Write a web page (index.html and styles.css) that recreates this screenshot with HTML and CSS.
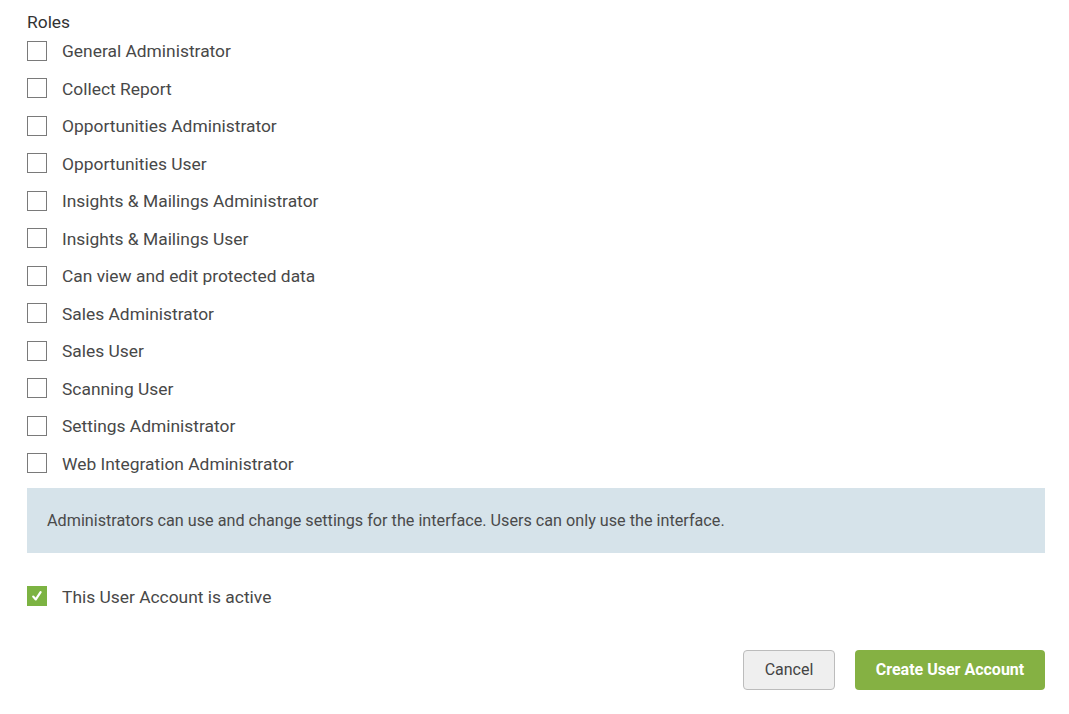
FILE: index.html
```html
<!DOCTYPE html>
<html>
<head>
<meta charset="utf-8">
<link rel="stylesheet" href="styles.css">
</head>
<body>
<div class="form">
  <div class="heading">Roles</div>
  <div class="roles">
    <label class="row"><span class="box"></span><span class="text">General Administrator</span></label>
    <label class="row"><span class="box"></span><span class="text">Collect Report</span></label>
    <label class="row"><span class="box"></span><span class="text">Opportunities Administrator</span></label>
    <label class="row"><span class="box"></span><span class="text">Opportunities User</span></label>
    <label class="row"><span class="box"></span><span class="text">Insights &amp; Mailings Administrator</span></label>
    <label class="row"><span class="box"></span><span class="text">Insights &amp; Mailings User</span></label>
    <label class="row"><span class="box"></span><span class="text">Can view and edit protected data</span></label>
    <label class="row"><span class="box"></span><span class="text">Sales Administrator</span></label>
    <label class="row"><span class="box"></span><span class="text">Sales User</span></label>
    <label class="row"><span class="box"></span><span class="text">Scanning User</span></label>
    <label class="row"><span class="box"></span><span class="text">Settings Administrator</span></label>
    <label class="row"><span class="box"></span><span class="text">Web Integration Administrator</span></label>
  </div>
  <div class="info">Administrators can use and change settings for the interface. Users can only use the interface.</div>
  <label class="row active"><span class="box checked"><svg width="12" height="12" viewBox="0 0 12 12"><path d="M2.2 6.6 L4.8 9.4 L9.6 2.2" fill="none" stroke="#fff" stroke-width="2.2" stroke-linecap="round" stroke-linejoin="round"/></svg></span><span class="text">This User Account is active</span></label>
  <div class="actions">
    <button class="btn cancel">Cancel</button>
    <button class="btn primary">Create User Account</button>
  </div>
</div>
</body>
</html>
```
FILE: styles.css
```css
html, body {
  margin: 0;
  padding: 0;
  background: #fff;
}
body {
  font-family: Roboto, "Liberation Sans", sans-serif;
  color: #444;
}
.form {
  width: 1018px;
  margin-left: 27px;
}
.heading {
  font-size: 17.4px;
  line-height: 20px;
  margin-top: 12px;
  color: #333;
  font-weight: 400;
}
.roles {
  display: flex;
  flex-direction: column;
}
.row {
  display: flex;
  align-items: center;
  height: 37.5px;
}
.box {
  box-sizing: border-box;
  width: 20px;
  height: 20px;
  border: 1.5px solid #7a7a7a;
  background: #fff;
  flex: none;
  display: flex;
  align-items: center;
  justify-content: center;
}
.box.checked {
  border: none;
  background: #7cb342;
}
.text {
  margin-left: 15px;
  padding-top: 1px;
  font-size: 17.4px;
  color: #484848;
}
.info {
  margin-top: 5.5px;
  background: #d6e3ea;
  height: 65px;
  box-sizing: border-box;
  padding: 0 20px;
  display: flex;
  align-items: center;
  font-size: 16.2px;
  color: #4a4a4a;
}
.active {
  margin-top: 25px;
}
.actions {
  margin-top: 34.5px;
  display: flex;
  justify-content: flex-end;
  gap: 20px;
}
.btn {
  height: 40px;
  border-radius: 4px;
  font-family: Roboto, "Liberation Sans", sans-serif;
  font-size: 16px;
  padding: 0 20px;
  cursor: pointer;
}
.cancel {
  width: 92px;
  background: #efefef;
  border: 1px solid #bcbcbc;
  color: #444;
}
.primary {
  width: 190px;
  background: #85b143;
  border: none;
  color: #fff;
  font-weight: 700;
}
```
